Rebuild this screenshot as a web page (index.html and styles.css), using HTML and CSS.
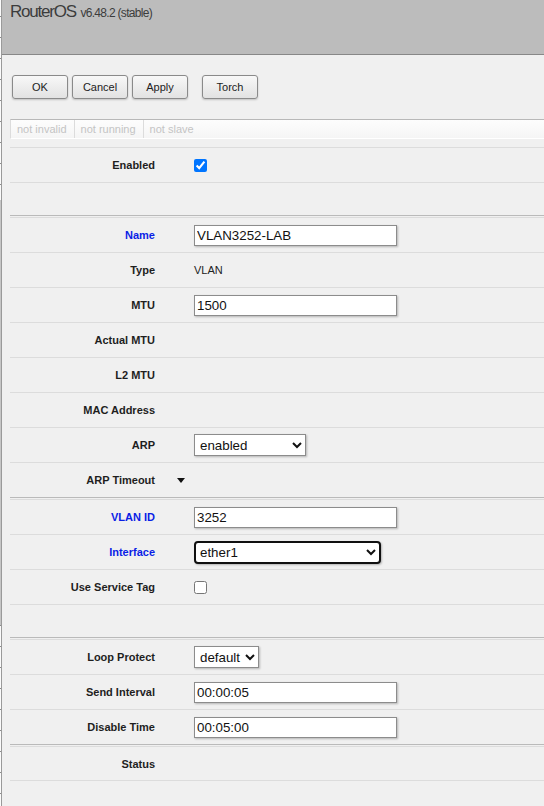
FILE: index.html
```html
<!DOCTYPE html>
<html lang="en">
<head>
  <meta charset="UTF-8">
  <meta name="viewport" content="width=device-width, initial-scale=1.0">
  <title>RouterOS - Interface &lt;VLAN3252-LAB&gt;</title>
  <link rel="stylesheet" href="styles.css">
</head>
<body>

  <div class="sidebar"></div>

  <div class="main">
    <div class="header">
      <span class="brand">RouterOS</span> <span class="version">v6.48.2 (stable)</span>
    </div>

    <div class="toolbar">
      <button type="button">OK</button>
      <button type="button">Cancel</button>
      <button type="button">Apply</button>
      <button type="button" class="spaced">Torch</button>
    </div>

    <form class="form" id="vlanForm">
      <div class="statusbar">
        <span>not invalid</span><span>not running</span><span>not slave</span>
      </div>

      <div class="group first">
        <div class="row">
          <label class="label">Enabled</label><span></span>
          <div><input type="checkbox" name="enabled" checked></div>
        </div>
        <div class="row blank"></div>
      </div>

      <div class="group">
        <div class="row">
          <label class="label key" for="name">Name</label><span></span>
          <div><input type="text" id="name" name="name" value="VLAN3252-LAB"></div>
        </div>
        <div class="row">
          <label class="label">Type</label><span></span>
          <div class="value">VLAN</div>
        </div>
        <div class="row">
          <label class="label" for="mtu">MTU</label><span></span>
          <div><input type="text" id="mtu" name="mtu" value="1500"></div>
        </div>
        <div class="row">
          <label class="label">Actual MTU</label><span></span>
          <div class="value"></div>
        </div>
        <div class="row">
          <label class="label">L2 MTU</label><span></span>
          <div class="value"></div>
        </div>
        <div class="row">
          <label class="label">MAC Address</label><span></span>
          <div class="value"></div>
        </div>
        <div class="row">
          <label class="label" for="arp">ARP</label><span></span>
          <div>
            <select id="arp" name="arp" class="sel-arp">
              <option>enabled</option>
              <option>disabled</option>
              <option>proxy-arp</option>
              <option>reply-only</option>
            </select>
          </div>
        </div>
        <div class="row">
          <label class="label">ARP Timeout</label><span class="toggle"></span>
          <div></div>
        </div>
      </div>

      <div class="group">
        <div class="row">
          <label class="label key" for="vlanId">VLAN ID</label><span></span>
          <div><input type="text" id="vlanId" name="vlan-id" value="3252"></div>
        </div>
        <div class="row">
          <label class="label key" for="iface">Interface</label><span></span>
          <div>
            <select id="iface" name="interface" class="sel-iface">
              <option>ether1</option>
              <option>ether2</option>
              <option>bridge</option>
            </select>
          </div>
        </div>
        <div class="row">
          <label class="label">Use Service Tag</label><span></span>
          <div><input type="checkbox" name="use-service-tag"></div>
        </div>
        <div class="row blank"></div>
      </div>

      <div class="group">
        <div class="row">
          <label class="label" for="loop">Loop Protect</label><span></span>
          <div>
            <select id="loop" name="loop-protect" class="sel-loop">
              <option>default</option>
              <option>on</option>
              <option>off</option>
            </select>
          </div>
        </div>
        <div class="row">
          <label class="label" for="sendInt">Send Interval</label><span></span>
          <div><input type="text" id="sendInt" name="send-interval" value="00:00:05"></div>
        </div>
        <div class="row">
          <label class="label" for="disTime">Disable Time</label><span></span>
          <div><input type="text" id="disTime" name="disable-time" value="00:05:00"></div>
        </div>
      </div>

      <div class="group last">
        <div class="row">
          <label class="label">Status</label><span></span>
          <div class="value"></div>
        </div>
      </div>
    </form>
  </div>

</body>
</html>
```

FILE: styles.css
```css
* {
  box-sizing: border-box;
  margin: 0;
  padding: 0;
}

body {
  font-family: "Liberation Sans", Arial, sans-serif;
  background-color: #f0f0f0;
  color: #1e1e1e;
  display: flex;
  min-height: 100vh;
}

/* edge of the menu column, with its item separators */
.sidebar {
  flex: none;
  width: 2px;
  border-right: 1px solid #9a9a9a;
  background:
    linear-gradient(#c6c6c6, #c6c6c6) 0 200px / 100% 425px no-repeat,
    repeating-linear-gradient(#fbfbfb 0 20px, #8c8c8c 20px 21px) 0 -4px;
}

.main {
  flex: 1;
  min-width: 0;
}

.header {
  height: 55px;
  background-color: #bcbcbc;
  border-bottom: 1px solid #888;
  padding: 2px 0 0 8px;
  color: #3c3c3c;
  line-height: 20px;
  white-space: nowrap;
}

.brand {
  font-size: 17px;
  letter-spacing: -1.2px;
}

.version {
  font-size: 12px;
  letter-spacing: -0.7px;
}

.toolbar {
  display: flex;
  gap: 4px;
  padding: 20px 0 0 10px;
}

.toolbar button {
  width: 56px;
  height: 24px;
  font-family: inherit;
  font-size: 11px;
  color: #222;
  background: linear-gradient(#f8f8f8, #e2e2e2);
  border: 1px solid #8a8a8a;
  border-radius: 3px;
  box-shadow: 0 1px 2px rgba(0, 0, 0, 0.2);
  cursor: pointer;
}

.toolbar button.spaced {
  margin-left: 10px;
}

.form {
  margin-left: 8px;
}

.statusbar {
  display: flex;
  height: 20px;
  margin: 20px 0 8px;
  border-top: 1px solid #b8b8b8;
  border-bottom: 1px solid #fff;
  border-left: 1px solid #dcdcdc;
  background: linear-gradient(#fdfdfd, #f5f5f5);
  font-size: 11px;
  line-height: 18px;
  color: #c4c4c4;
}

.statusbar span {
  padding: 0 7px 0 6px;
  border-right: 1px solid #dcdcdc;
}

.statusbar span:last-child {
  border-right: none;
}

.group {
  border-top: 1px solid #bababa;
  padding-top: 1px;
}

.group.first {
  border-top: none;
  padding-top: 0;
}

.row {
  display: grid;
  grid-template-columns: 145px 39px 1fr;
  align-items: center;
  height: 35px;
  border-top: 1px solid #dcdcdc;
}

.row.blank {
  height: 33px;
}

.group.last .row:last-child {
  border-bottom: 1px solid #dcdcdc;
}

.label {
  text-align: right;
  font-size: 11px;
  font-weight: bold;
  color: #1e1e1e;
}

.label.key {
  color: #0a1ee6;
}

.value {
  font-size: 11px;
  color: #222;
}

.toggle {
  justify-self: end;
  margin-right: 9px;
  width: 0;
  height: 0;
  border-left: 4.5px solid transparent;
  border-right: 4.5px solid transparent;
  border-top: 5px solid #111;
}

.row input[type="text"] {
  display: block;
  width: 203px;
  height: 21px;
  padding: 0 2px;
  font-family: inherit;
  font-size: 13.33px;
  color: #111;
  background: #fff;
  border: 1px solid #8c8c8c;
  box-shadow: 1px 1px 2px rgba(0, 0, 0, 0.25);
}

.row input[type="checkbox"] {
  display: block;
  width: 13px;
  height: 13px;
  margin: 0;
}

.row select {
  display: block;
  height: 22px;
  padding: 0 0 0 1px;
  font-family: inherit;
  font-size: 13.33px;
  color: #111;
  background-color: #fff;
  border: 1px solid #8c8c8c;
  box-shadow: 1px 1px 2px rgba(0, 0, 0, 0.25);
}

.sel-arp {
  width: 112px;
}

.sel-loop {
  width: 65px;
}

/* focused select keeps the dark ring */
.row select.sel-iface {
  width: 187px;
  height: 23px;
  padding-left: 0;
  border: 2px solid #101010;
  border-radius: 4px;
}
```
